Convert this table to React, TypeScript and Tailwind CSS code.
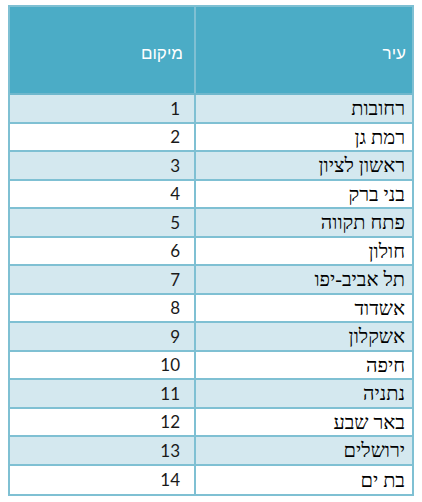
import React from "react";

const rows: [string, number][] = [
  ["רחובות", 1],
  ["רמת גן", 2],
  ["ראשון לציון", 3],
  ["בני ברק", 4],
  ["פתח תקווה", 5],
  ["חולון", 6],
  ["תל אביב-יפו", 7],
  ["אשדוד", 8],
  ["אשקלון", 9],
  ["חיפה", 10],
  ["נתניה", 11],
  ["באר שבע", 12],
  ["ירושלים", 13],
  ["בת ים", 14],
];

export default function App() {
  return (
    <div className="w-[422px] h-[502px] bg-white pt-[5px] pl-[8px]">
      <div
        dir="rtl"
        className="w-[406px] border-2 border-[#7fc0d3] flex flex-col"
      >
        <div className="flex h-[88px] bg-[#4bacc6] border-b-2 border-[#6fb7cc]">
          <div className="w-[218px] flex items-center pt-[8px] pr-[6px] text-white text-[17px] font-['Liberation_Sans',sans-serif] border-l-2 border-[#7fc0d3]">
            עיר
          </div>
          <div className="flex-1 flex items-center pt-[8px] pr-[11px] text-white text-[17px] font-['Liberation_Sans',sans-serif]">
            מיקום
          </div>
        </div>
        {rows.map(([city, n], i) => (
          <div
            key={n}
            className={
              "flex h-[28.5px] " +
              (i % 2 === 0 ? "bg-[#d4e8ef]" : "bg-white") +
              (i < rows.length - 1 ? " border-b-2 border-[#7fc0d3]" : "")
            }
          >
            <div className="w-[218px] flex items-center pr-[7px] text-[20px] text-black font-['Liberation_Serif',serif] border-l-2 border-[#7fc0d3]">
              {city}
            </div>
            <div
              dir="ltr"
              className="flex-1 flex items-center justify-end pr-[14px] text-[17px] text-[#1a1a1a] font-['Lato',sans-serif]"
            >
              {n}
            </div>
          </div>
        ))}
      </div>
    </div>
  );
}
